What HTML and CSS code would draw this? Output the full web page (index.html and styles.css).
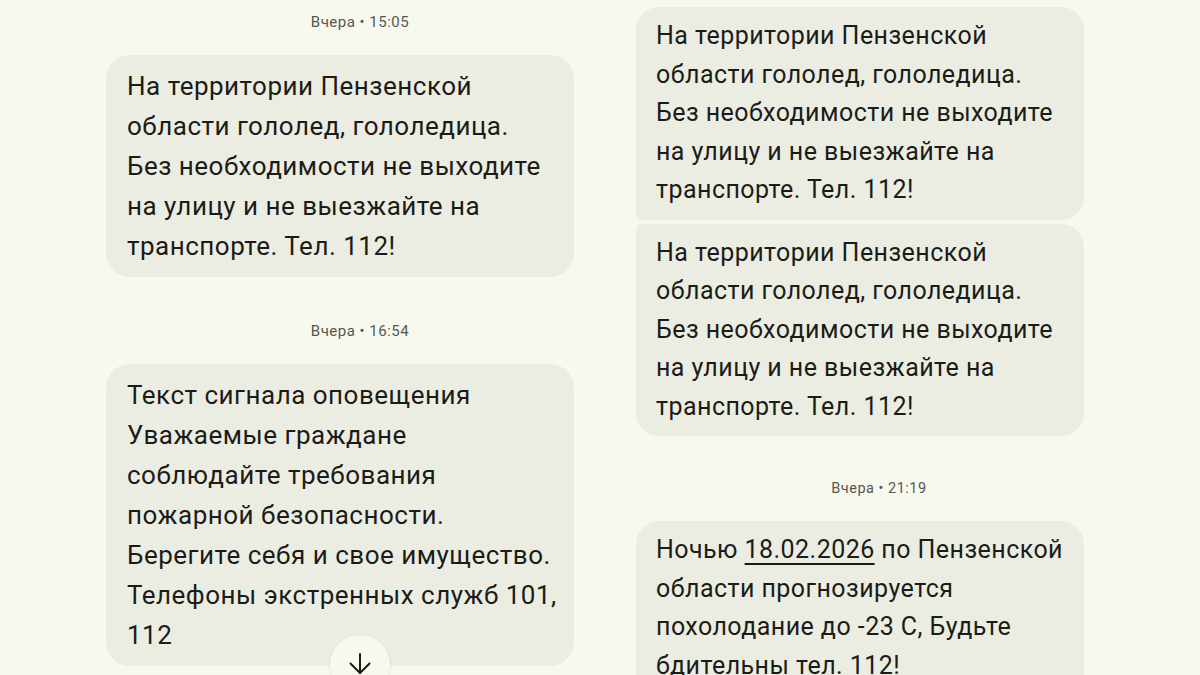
FILE: index.html
```html
<!DOCTYPE html>
<html lang="ru">
<head>
  <meta charset="UTF-8">
  <title>Сообщения</title>
  <meta name="viewport" content="width=device-width, initial-scale=1.0">
  <link rel="stylesheet" href="styles.css">
</head>
<body>

<div class="screens">

  <!-- Left screen -->
  <div class="screen screen-left">
    <div class="stamp first">Вчера • 15:05</div>
    <div class="bubble">На территории Пензенской области гололед, гололедица. Без необходимости не выходите на улицу и не выезжайте на транспорте. Тел. 112!</div>

    <div class="stamp">Вчера • 16:54</div>
    <div class="bubble">Текст сигнала оповещения<br>Уважаемые граждане соблюдайте требования пожарной безопасности.<br>Берегите себя и свое имущество.<br>Телефоны экстренных служб 101, 112</div>

    <button class="scroll-down" aria-label="Вниз">
      <svg width="26" height="26" viewBox="0 0 26 26" fill="none" stroke="#1b1c18" stroke-width="2" stroke-linecap="round" stroke-linejoin="round">
        <path d="M13 3v19"/>
        <path d="M3.5 12.5 13 22l9.5-9.5"/>
      </svg>
    </button>
  </div>

  <!-- Right screen -->
  <div class="screen screen-right">
    <div class="bubble group-top">На территории Пензенской области гололед, гололедица. Без необходимости не выходите на улицу и не выезжайте на транспорте. Тел. 112!</div>
    <div class="bubble group-bottom">На территории Пензенской области гололед, гололедица. Без необходимости не выходите на улицу и не выезжайте на транспорте. Тел. 112!</div>

    <div class="stamp">Вчера • 21:19</div>
    <div class="bubble">Ночью <span class="link">18.02.2026</span> по Пензенской области прогнозируется похолодание до -23 С, Будьте бдительны тел. 112!</div>
  </div>

</div>

</body>
</html>
```

FILE: styles.css
```css
body {
  margin: 0;
  height: 675px;
  overflow: hidden;
  background-color: #f7f8ee;
  font-family: Roboto, "Noto Sans", sans-serif;
  color: #1b1c18;
}

.screens {
  display: flex;
  gap: 22px;
  padding-left: 106px;
}

.screen {
  position: relative;
  display: flex;
  flex-direction: column;
  align-items: flex-start;
}

.screen-left {
  width: 508px;
  font-size: 26px;
  letter-spacing: 0.5px;
}

.screen-right {
  width: 486px;
  font-size: 25px;
  letter-spacing: 0.45px;
  padding-top: 8px;
}

.stamp {
  align-self: stretch;
  text-align: center;
  font-size: 15px;
  letter-spacing: 0.5px;
  line-height: 20px;
  color: #55584f;
  margin: 44px 0 23px;
}

.stamp.first {
  margin-top: 12px;
}

.screen-right .stamp {
  font-size: 14.5px;
  margin: 43px 0 22px;
}

.bubble {
  box-sizing: border-box;
  width: 468px;
  padding: 11px 14px 11px 21px;
  line-height: 40px;
  background-color: #ecede2;
  border-radius: 24px;
}

.screen-right .bubble {
  width: 448px;
  padding: 10px 20px 10px 20px;
  line-height: 38.5px;
  border-radius: 23px;
}

.bubble.group-top {
  margin-top: -1px;
  border-bottom-left-radius: 5px;
}

.bubble.group-bottom {
  margin-top: 4px;
  border-top-left-radius: 5px;
}

.link {
  text-decoration: underline;
  text-underline-offset: 5px;
  text-decoration-thickness: 1.5px;
}

.scroll-down {
  position: absolute;
  left: 224px;
  top: 635px;
  width: 60px;
  height: 60px;
  padding: 0;
  border: none;
  border-radius: 50%;
  background-color: #f7f8ee;
  box-shadow: 0 1px 3px rgba(0, 0, 0, 0.12);
  display: flex;
  align-items: center;
  justify-content: center;
  cursor: pointer;
}

.scroll-down svg {
  margin-top: -2px;
}
```
